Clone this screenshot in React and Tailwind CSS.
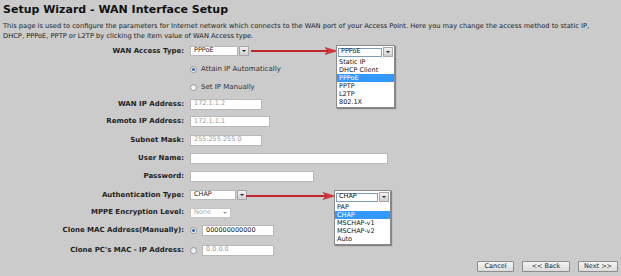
import React from 'react';

const FONT = { fontFamily: '"DejaVu Sans", Verdana, sans-serif' };

function Radio({ checked }) {
  return (
    <span className="flex h-[7px] w-[7px] items-center justify-center rounded-full border border-[#9a9a9a] bg-gradient-to-b from-[#e6e6e6] to-white">
      {checked && <span className="h-[3px] w-[3px] rounded-full bg-[#2a5fa8]" />}
    </span>
  );
}

function TextBox({ width, value, muted }) {
  return (
    <div
      className={`flex h-[11px] items-center border border-[#b8b8b8] bg-white pl-[3px] text-[6.5px] ${
        muted ? 'text-[#9a9a9a]' : 'text-[#222]'
      }`}
      style={{ width }}
    >
      {value}
    </div>
  );
}

function DropButton() {
  return (
    <div className="flex h-[10px] w-[10px] items-center justify-center border border-[#a8a8a8] bg-gradient-to-b from-[#f2f2f2] to-[#cfcfcf]">
      <span className="h-0 w-0 border-x-[2px] border-t-[2px] border-x-transparent border-t-[#222]" />
    </div>
  );
}

function Select({ width, value }) {
  return (
    <div className="flex items-center">
      <div
        className="flex h-[10px] items-center border border-[#b8b8b8] bg-white pl-[3px] text-[6.5px] text-[#222]"
        style={{ width }}
      >
        {value}
      </div>
      <div className="ml-[1px]">
        <DropButton />
      </div>
    </div>
  );
}

function Row({ label, h, children }) {
  return (
    <div className="flex items-center" style={{ height: h }}>
      <div className="w-[184px] text-right text-[7px] font-bold text-[#1e1e1e]">{label}</div>
      <div className="ml-[6px] flex items-center">{children}</div>
    </div>
  );
}

function Arrow({ width }) {
  return (
    <svg width={width} height="8" viewBox={`0 0 ${width} 8`}>
      <line x1="0" y1="4" x2={width - 9} y2="4" stroke="#c1272d" strokeWidth="2" />
      <polygon points={`${width - 12},0.5 ${width},4 ${width - 12},7.5 ${width - 9},4`} fill="#d8353a" stroke="#a51f24" strokeWidth="0.5" />
    </svg>
  );
}

function OpenList({ width, value, options, selected }) {
  return (
    <div className="border border-[#8a8a8a] bg-white shadow-[1px_1px_1px_rgba(0,0,0,0.35)]" style={{ width }}>
      <div className="flex items-center justify-between p-[1px]">
        <div className="flex h-[9px] flex-1 items-center border border-[#7f9db9] pl-[2px] text-[6.5px] text-[#111]">
          {value}
        </div>
        <div className="ml-[1px]">
          <DropButton />
        </div>
      </div>
      <div className="pb-[1px]">
        {options.map((o) => (
          <div
            key={o}
            className={`h-[8px] pl-[2px] text-[6.5px] leading-[8px] ${
              o === selected ? 'bg-[#3399ff] text-white' : 'text-[#111]'
            }`}
          >
            {o}
          </div>
        ))}
      </div>
    </div>
  );
}

export default function App() {
  return (
    <div className="relative h-[276px] w-[621px] overflow-hidden bg-[#cbcbcb]" style={FONT}>
      {/* Header */}
      <h1 className="ml-[3px] mt-[3px] text-[11px] font-bold leading-[14px] text-[#111]">
        Setup Wizard - WAN Interface Setup
      </h1>
      <p className="ml-[3px] mt-[4px] whitespace-nowrap text-[6.7px] leading-[10px] text-[#222]">
        This page is used to configure the parameters for Internet network which connects to the WAN port of your
        Access Point. Here you may change the access method to static IP,
        <br />
        DHCP, PPPoE, PPTP or L2TP by clicking the item value of WAN Access type.
      </p>

      {/* Form */}
      <div className="mt-[1px] flex flex-col">
        <Row label="WAN Access Type:" h={18}>
          <Select width={48} value="PPPoE" />
        </Row>
        <Row label="" h={18}>
          <Radio checked />
          <span className="ml-[4px] text-[7px] text-[#333]">Attain IP Automatically</span>
        </Row>
        <Row label="" h={18}>
          <Radio />
          <span className="ml-[4px] text-[7px] text-[#333]">Set IP Manually</span>
        </Row>
        <Row label="WAN IP Address:" h={16}>
          <TextBox width={72} value="172.1.1.2" muted />
        </Row>
        <Row label="Remote IP Address:" h={19}>
          <TextBox width={80} value="172.1.1.1" muted />
        </Row>
        <Row label="Subnet Mask:" h={18}>
          <TextBox width={72} value="255.255.255.0" muted />
        </Row>
        <Row label="User Name:" h={18}>
          <TextBox width={198} value="" />
        </Row>
        <Row label="Password:" h={19}>
          <TextBox width={124} value="" />
        </Row>
        <Row label="Authentication Type:" h={18}>
          <Select width={46} value="CHAP" />
        </Row>
        <Row label="MPPE Encryption Level:" h={17}>
          <div className="flex h-[10px] w-[41px] items-center justify-between border border-[#c4c4c4] bg-white px-[3px] text-[6.5px] text-[#aaa]">
            None
            <span className="h-0 w-0 border-x-[2px] border-t-[2px] border-x-transparent border-t-[#999]" />
          </div>
        </Row>
        <Row label="Clone MAC Address(Manually):" h={19}>
          <Radio checked />
          <div className="ml-[5px]">
            <TextBox width={72} value="000000000000" />
          </div>
        </Row>
        <Row label="Clone PC's MAC - IP Address:" h={20}>
          <Radio />
          <div className="ml-[5px]">
            <TextBox width={72} value="0.0.0.0" muted />
          </div>
        </Row>
      </div>

      {/* Buttons */}
      <div className="mt-[1px] flex justify-end gap-[8px] pr-[3px]">
        {[
          ['Cancel', 37],
          ['<< Back', 48],
          ['Next >>', 40],
        ].map(([t, w]) => (
          <button
            key={t}
            className="flex h-[11px] items-center justify-center rounded-[1px] border border-[#8c8c8c] bg-gradient-to-b from-[#f4f4f4] to-[#dcdcdc] text-[6.5px] text-[#222]"
            style={{ width: w }}
          >
            {t}
          </button>
        ))}
      </div>

      {/* Annotation arrows and opened lists */}
      <div className="absolute left-[251px] top-[47px]">
        <Arrow width={86} />
      </div>
      <div className="absolute left-[336px] top-[45px]">
        <OpenList
          width={59}
          value="PPPoE"
          selected="PPPoE"
          options={['Static IP', 'DHCP Client', 'PPPoE', 'PPTP', 'L2TP', '802.1X']}
        />
      </div>
      <div className="absolute left-[246px] top-[192px]">
        <Arrow width={89} />
      </div>
      <div className="absolute left-[334px] top-[190px]">
        <OpenList
          width={57}
          value="CHAP"
          selected="CHAP"
          options={['PAP', 'CHAP', 'MSCHAP-v1', 'MSCHAP-v2', 'Auto']}
        />
      </div>
    </div>
  );
}
